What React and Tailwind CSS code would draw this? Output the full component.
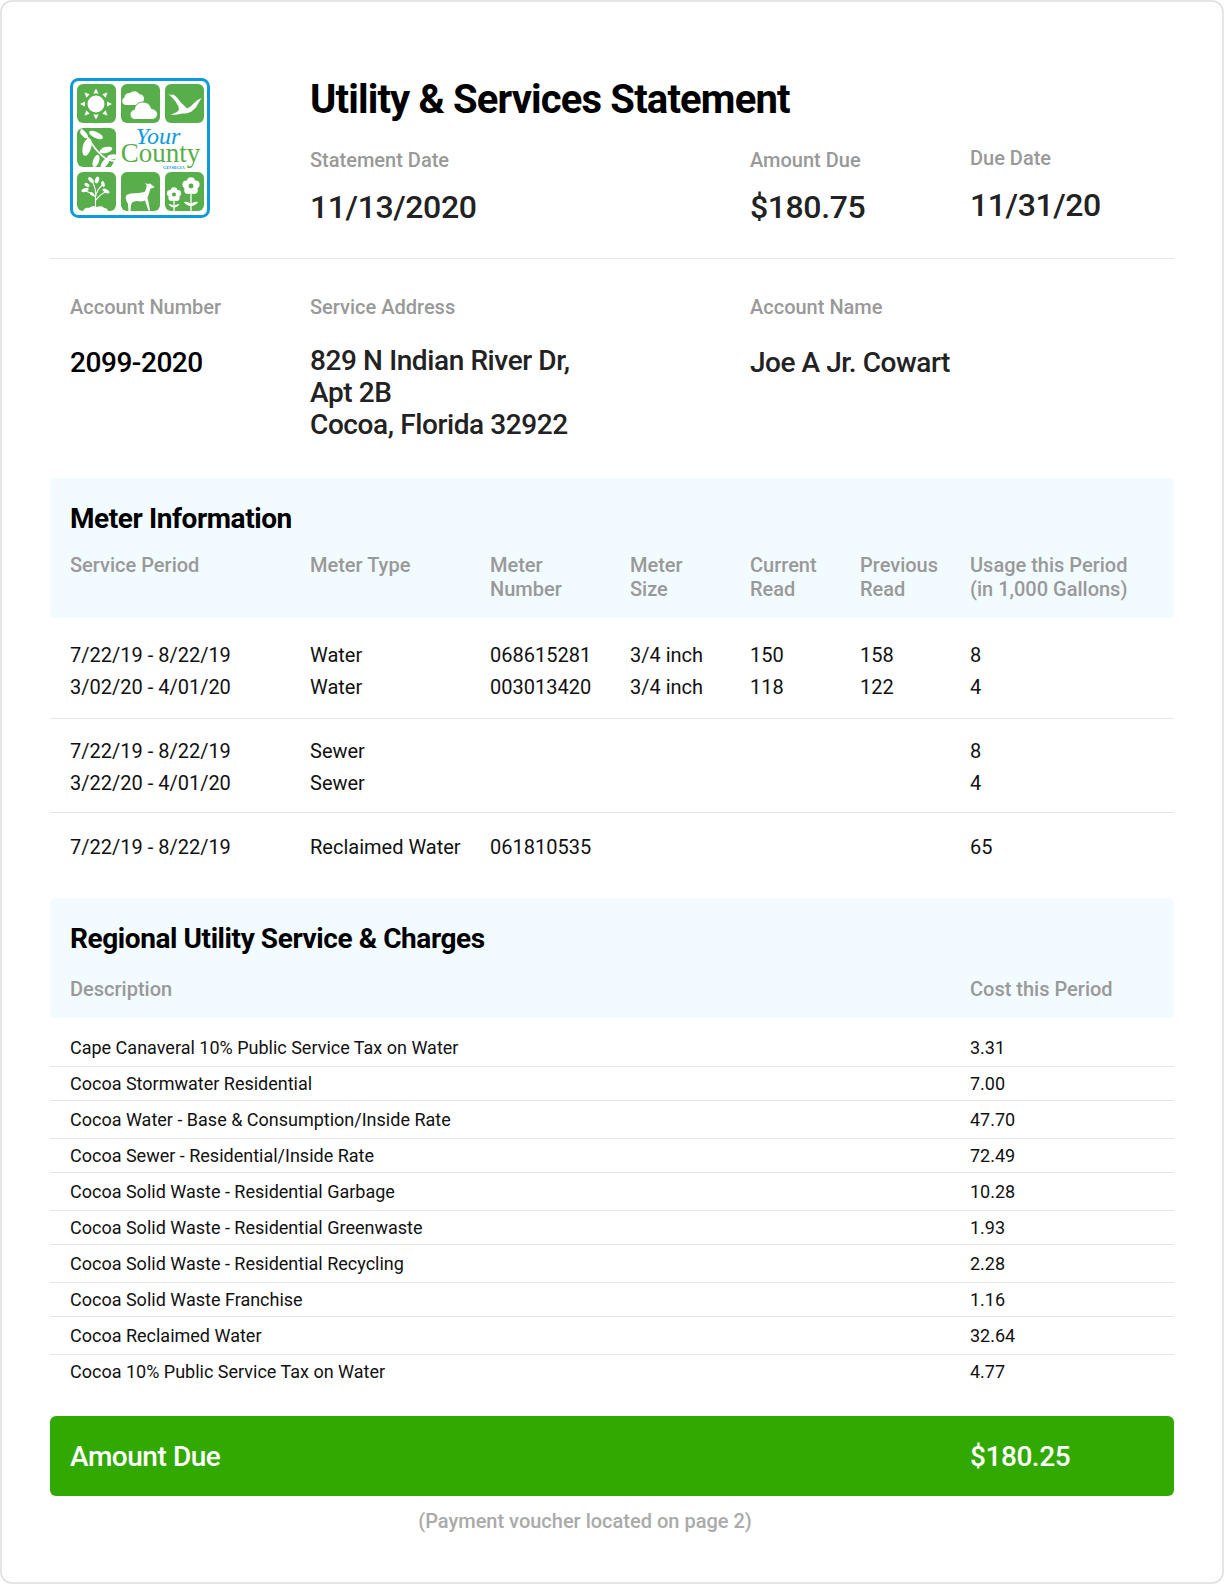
const meterCols = 'grid grid-cols-[240px_180px_140px_120px_110px_110px_1fr]'

const meterGroups = [
  [
    ['7/22/19 - 8/22/19', 'Water', '068615281', '3/4 inch', '150', '158', '8'],
    ['3/02/20 - 4/01/20', 'Water', '003013420', '3/4 inch', '118', '122', '4'],
  ],
  [
    ['7/22/19 - 8/22/19', 'Sewer', '', '', '', '', '8'],
    ['3/22/20 - 4/01/20', 'Sewer', '', '', '', '', '4'],
  ],
  [['7/22/19 - 8/22/19', 'Reclaimed Water', '061810535', '', '', '', '65']],
]

const charges = [
  ['Cape Canaveral 10% Public Service Tax on Water', '3.31'],
  ['Cocoa Stormwater Residential', '7.00'],
  ['Cocoa Water - Base & Consumption/Inside Rate', '47.70'],
  ['Cocoa Sewer - Residential/Inside Rate', '72.49'],
  ['Cocoa Solid Waste - Residential Garbage', '10.28'],
  ['Cocoa Solid Waste - Residential Greenwaste', '1.93'],
  ['Cocoa Solid Waste - Residential Recycling', '2.28'],
  ['Cocoa Solid Waste Franchise', '1.16'],
  ['Cocoa Reclaimed Water', '32.64'],
  ['Cocoa 10% Public Service Tax on Water', '4.77'],
]

const GREEN = '#58ae4a'
const BLUE = '#0e9bdc'

const Flower = ({ cx, cy, r, d }) => (
  <g>
    {[0, 72, 144, 216, 288].map((a) => (
      <circle key={a} cx={cx + d * Math.sin((a * Math.PI) / 180)} cy={cy - d * Math.cos((a * Math.PI) / 180)} r={r} fill="#fff" />
    ))}
    <circle cx={cx} cy={cy} r={r * 0.62} fill={GREEN} />
  </g>
)

const Leaf = ({ x, y, rx, ry, rot }) => (
  <ellipse cx={x} cy={y} rx={rx} ry={ry} transform={`rotate(${rot} ${x} ${y})`} fill="#fff" />
)

const Logo = () => (
  <svg width="140" height="140" viewBox="0 0 140 140">
    <rect x="1.5" y="1.5" width="137" height="137" rx="7" fill="#fff" stroke={BLUE} strokeWidth="3" />
    <g fill={GREEN}>
      <rect x="7" y="6" width="39" height="39" rx="6" />
      <rect x="51" y="6" width="39" height="39" rx="6" />
      <rect x="95" y="6" width="39" height="39" rx="6" />
      <rect x="7" y="50" width="39" height="39" rx="6" />
      <rect x="7" y="94" width="39" height="39" rx="6" />
      <rect x="51" y="94" width="39" height="39" rx="6" />
      <rect x="95" y="94" width="39" height="39" rx="6" />
    </g>

    {/* sun */}
    <g fill="#fff">
      <circle cx="26" cy="26" r="8.500" />
      <path d="M26 10.500l2.600 5h-5.200zM26 41.500l2.600-5h-5.200zM10 26l5-2.500v5zM42 26l-5-2.500v5zM14.500 14.500l5.200 1.800-3.400 3.400zM37.500 14.500l-5.200 1.800 3.400 3.400zM14.500 37.500l5.200-1.800-3.400-3.400zM37.500 37.500l-5.200-1.800 3.400-3.400z" />
    </g>

    {/* clouds */}
    <path d="M56 27a4 4 0 0 1-1.500-7.600c.2-3 2.800-4.900 5.500-4.200 2-3 7.500-2.800 9.300 1 2.700-.3 4.700 1.800 4.700 4.300 0 3.500-2.500 6.500-6 6.500z" fill="#fff" />
    <path d="M65 41.500c-2.800 0-5-2.200-5-5 0-2.600 1.900-4.700 4.400-5 .5-4.300 3.800-7.500 8.600-7.500 4.300 0 7.700 2.900 8.500 6.700 3.300 0 6 2.500 6 5.600 0 2.900-2.400 5.200-5.500 5.200z" fill="#fff" stroke={GREEN} strokeWidth="1" />

    {/* bird */}
    <path d="M98 15.500l2.500 1.500 3-.5 3.500 3 3.500 4.500 3 3 3.500 3.500 3.500-2 3-3 4-3.500 4-2-3 5-2.500 4.500-4.500 4-3.500 1.500-3 .5-2.500 0-5 1-7 .5 6.500-3 2-2.500-.5-3-3-5-3-3.500-2.500-2.500z" fill="#fff" />

    {/* branch */}
    <path d="M11 51c4 4 7 9 11 15s9 11 13 14 8 3 11 3" fill="none" stroke="#fff" strokeWidth="1.600" />
    <g>
      <Leaf x="17" y="69" rx="9" ry="4.200" rot="-75" />
      <Leaf x="26" y="57" rx="7.500" ry="3" rot="25" />
      <Leaf x="14" y="56" rx="5" ry="2.500" rot="50" />
      <Leaf x="26" y="83" rx="6.500" ry="3" rot="-70" />
      <Leaf x="36" y="72" rx="6.500" ry="3" rot="-15" />
      <Leaf x="35" y="85" rx="6" ry="2.800" rot="-50" />
      <Leaf x="42" y="79" rx="5" ry="2.500" rot="-10" />
      <path d="M46 80l-5 9h5z" fill="#fff" />
      <path d="M7 84c1 3 2 5 5 5H7z" fill="#fff" />
    </g>

    {/* sprout */}
    <g fill="#fff">
      <path d="M13 133c1-3 4-4 6-3 2-2 6-2 8-1 2-1 6-1 7 1 2 0 4 1 4 3z" />
      <Leaf x="15" y="112" rx="3.800" ry="1.800" rot="-20" />
      <Leaf x="17" y="107" rx="2.800" ry="1.800" rot="30" />
      <Leaf x="21" y="102" rx="3.600" ry="1.800" rot="50" />
      <Leaf x="27" y="102" rx="3.500" ry="2" rot="-70" />
      <Leaf x="33" y="106" rx="3" ry="1.700" rot="70" />
      <Leaf x="36" y="113" rx="3.800" ry="1.800" rot="30" />
      <Leaf x="22" y="116" rx="2.500" ry="1.500" rot="30" />
    </g>
    <path d="M25.500 129v-15c0-3-1-6-3-10M25.500 119c-3-3-6-5-10-6M25.500 119c1-5 3-9 7-12M26 122c3-4 6-7 10-8" fill="none" stroke="#fff" strokeWidth="1.100" />

    {/* deer */}
    <path d="M55.500 120l1-3 4-1.500 8-.5 6-1 1.500-3 .8-3.500-1.800-2.500 2.500 1 2.500-.5 4.500 3.500-1 1-3 .5-1.500 5-1.500 4.500 1 4 1.500 8.500h-1.500l-2.500-7-1-3-3.500 1-5-.5-4 1-1.500 3-.5 6.500h-2l-.5-7.500-1.500-3z" fill="#fff" />

    {/* flowers */}
    <g>
      <path d="M121 115v18M104 122v11" stroke="#fff" strokeWidth="1.300" />
      <path d="M121 126c2-2 5-2.500 7-2-1 2-4 4-7 4zM121 126c-2-2-5-2.500-7-2 1 2 4 4 7 4zM104 128c2-1.500 4-2 5.500-1.500-1 1.500-3.500 3-5.500 3zM104 128c-2-1.500-4-2-5.500-1.500 1 1.500 3.500 3 5.500 3z" fill="#fff" />
      <Flower cx={121} cy={108} r={4} d={4.800} />
      <Flower cx={104} cy={116.500} r={3.300} d={4} />
    </g>

    <text x="88" y="65.500" textAnchor="middle" fontFamily="'Liberation Serif', serif" fontStyle="italic" fontSize="24" fill={BLUE}>Your</text>
    <text x="90.500" y="84" textAnchor="middle" fontFamily="'Liberation Serif', serif" fontSize="27" fill={GREEN}>County</text>
    <text x="104" y="90.500" textAnchor="middle" fontFamily="'Liberation Serif', serif" fontWeight="700" fontSize="4.500" fill={BLUE}>GEORGIA</text>
  </svg>
)

const Label = ({ children }) => (
  <div className="text-[20px] leading-[24px] font-medium text-[#999999]">{children}</div>
)

const BigValue = ({ children }) => (
  <div className="text-[32px] leading-[40px] font-medium tracking-[-0.4px] text-[#222222] mt-[15px]">{children}</div>
)

const App = () => {
  return (
    <div className="w-[1224px] h-[1584px] bg-white border-2 border-[#e5e5e5] rounded-xl px-[48px] pt-[76px] font-['Roboto',sans-serif]">
      <div className="grid grid-cols-[260px_440px_220px_1fr] border-b border-[#e5e5e5] h-[181px]">
        <div className="pl-[20px]"><Logo /></div>
        <div className="col-span-3">
          <h1 className="text-[40px] leading-[44px] font-bold text-black tracking-[-0.85px]">Utility &amp; Services Statement</h1>
          <div className="grid grid-cols-[440px_220px_1fr] mt-[26px]">
            <div>
              <Label>Statement Date</Label>
              <BigValue>11/13/2020</BigValue>
            </div>
            <div>
              <Label>Amount Due</Label>
              <BigValue>$180.75</BigValue>
            </div>
            <div className="-mt-[2px]">
              <Label>Due Date</Label>
              <BigValue>11/31/20</BigValue>
            </div>
          </div>
        </div>
      </div>

      <div className="grid grid-cols-[260px_440px_1fr] h-[219px] pt-[36px]">
        <div className="pl-[20px]">
          <Label>Account Number</Label>
          <div className="text-[28px] leading-[32px] font-medium tracking-[-0.45px] text-black mt-[28px]">2099-2020</div>
        </div>
        <div>
          <Label>Service Address</Label>
          <div className="text-[28px] leading-[32px] font-medium tracking-[-0.4px] text-[#222222] mt-[26px]">
            829 N Indian River Dr,<br />Apt 2B<br />Cocoa, Florida 32922
          </div>
        </div>
        <div>
          <Label>Account Name</Label>
          <div className="text-[28px] leading-[32px] font-medium tracking-[-0.45px] text-[#222222] mt-[28px]">Joe A Jr. Cowart</div>
        </div>
      </div>

      <div className="bg-[#f2fbff] rounded-md h-[140px] px-[20px] pt-[23px]">
        <h2 className="text-[28px] leading-[36px] font-bold text-black tracking-[-0.42px]">Meter Information</h2>
        <div className={`${meterCols} mt-[16px] text-[20px] leading-[24px] font-medium text-[#999999]`}>
          <div>Service Period</div>
          <div>Meter Type</div>
          <div>Meter<br />Number</div>
          <div>Meter<br />Size</div>
          <div>Current<br />Read</div>
          <div>Previous<br />Read</div>
          <div className="whitespace-nowrap">Usage this Period<br />(in 1,000 Gallons)</div>
        </div>
      </div>

      <div>
        {meterGroups.map((group, i) => (
          <div key={i} className={`px-[20px] text-[20px] leading-[32px] text-[#111111] ${i < 2 ? 'border-b border-[#e5e5e5]' : ''} ${i === 0 ? 'pt-[21px] pb-[15px]' : i === 1 ? 'pt-[16px] pb-[13px]' : 'pt-[18px] pb-[13px]'}`}>
            {group.map((row, j) => (
              <div key={j} className={meterCols}>
                {row.map((cell, k) => <div key={k}>{cell}</div>)}
              </div>
            ))}
          </div>
        ))}
      </div>

      <div className="bg-[#f2fbff] rounded-md h-[120px] px-[20px] pt-[23px] mt-[22px]">
        <h2 className="text-[28px] leading-[36px] font-bold text-black tracking-[-0.42px]">Regional Utility Service &amp; Charges</h2>
        <div className="flex mt-[20px] text-[20px] leading-[24px] font-medium text-[#999999]">
          <div className="w-[900px]">Description</div>
          <div>Cost this Period</div>
        </div>
      </div>

      <div className="mt-[11px]">
        {charges.map(([name, cost], i) => (
          <div key={name} className={`flex items-center px-[20px] text-[18px] leading-[24px] text-[#111111] ${i % 2 === 0 ? 'h-[38px]' : 'h-[34px]'} ${i < charges.length - 1 ? 'border-b border-[#e5e5e5]' : ''}`}>
            <div className="w-[900px]">{name}</div>
            <div>{cost}</div>
          </div>
        ))}
      </div>

      <div className="flex items-center h-[80px] mt-[27px] pt-[1px] px-[20px] bg-[#31a900] rounded-md text-[28px] text-white font-medium tracking-[-0.45px]">
        <div className="w-[900px]">Amount Due</div>
        <div>$180.25</div>
      </div>

      <div className="text-center pr-[54px] text-[20px] leading-[24px] text-[#aaaaaa] font-medium mt-[13px]">(Payment voucher located on page 2)</div>
    </div>
  )
}

export default App
